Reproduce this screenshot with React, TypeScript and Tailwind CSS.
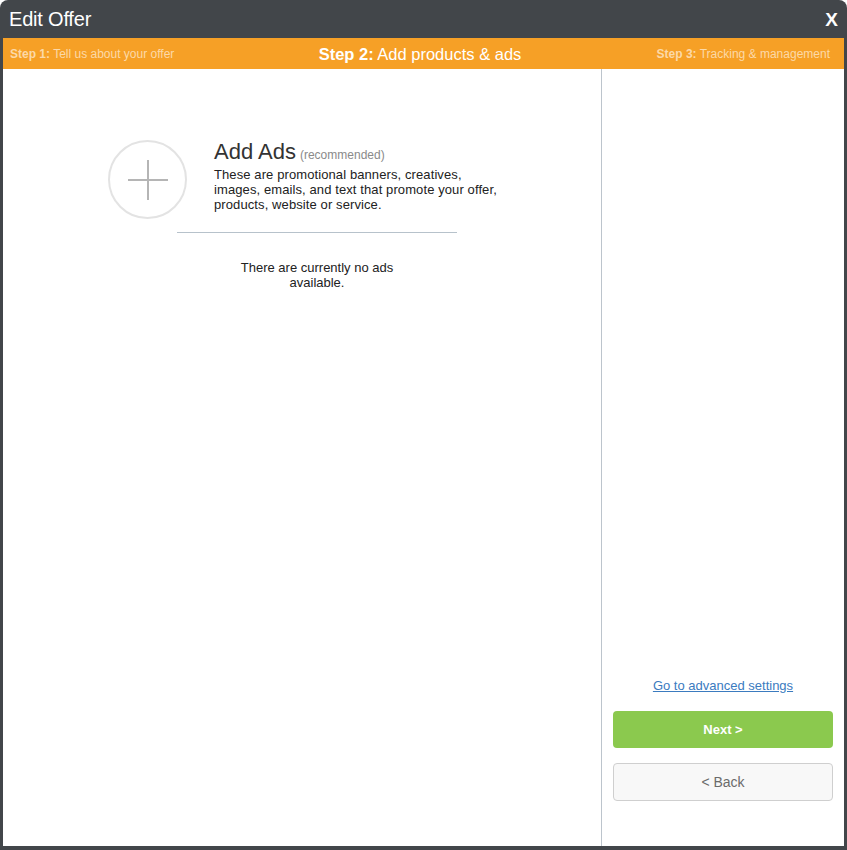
import React from "react";

export default function App() {
  return (
    <div className="w-[847px] h-[850px] bg-white" style={{ fontFamily: '"Liberation Sans", Arial, sans-serif' }}>
      <div className="w-full h-full rounded-t-[8px] bg-[#42464a] flex flex-col pb-[4px]">
        {/* Header */}
        <div className="h-[38px] flex items-center justify-between pl-[9px] pr-[9px] shrink-0">
          <span className="text-white text-[20px] leading-none tracking-[-0.2px]">Edit Offer</span>
          <span className="text-white text-[19px] font-bold leading-none">X</span>
        </div>
        {/* Steps bar */}
        <div className="mx-[3px] h-[31px] bg-[#f6a026] grid grid-cols-3 items-center pl-[7px] pr-[14px] shrink-0">
          <div className="text-left text-[12px] text-[#fcd9a8] whitespace-nowrap">
            <span className="font-bold">Step 1:</span> Tell us about your offer
          </div>
          <div className="text-center text-[16.5px] text-white whitespace-nowrap mt-[1px]">
            <span className="font-bold">Step 2:</span> Add products &amp; ads
          </div>
          <div className="text-right text-[12px] text-[#fcd9a8] whitespace-nowrap">
            <span className="font-bold">Step 3:</span> Tracking &amp; management
          </div>
        </div>
        {/* Body */}
        <div className="mx-[3px] flex-1 bg-white flex min-h-0">
          {/* Left panel */}
          <div className="w-[598px] shrink-0 pt-[71px]">
            <div className="flex items-start pl-[105px]">
              <div className="w-[79px] h-[79px] rounded-full border-2 border-[#e3e3e3] flex items-center justify-center shrink-0">
                <svg width="40" height="40" viewBox="0 0 40 40">
                  <line x1="0" y1="20" x2="40" y2="20" stroke="#b5b5b5" strokeWidth="2" />
                  <line x1="20" y1="0" x2="20" y2="40" stroke="#b5b5b5" strokeWidth="2" />
                </svg>
              </div>
              <div className="ml-[27px] w-[292px]">
                <div className="leading-[24px] text-[#333]">
                  <span className="text-[22px]">Add Ads</span>
                  <span className="text-[12px] text-[#8a8a8a] ml-[4px]">(recommended)</span>
                </div>
                <p className="text-[13px] leading-[15px] text-[#222] tracking-[0.1px]">
                  These are promotional banners, creatives, images, emails, and text that promote your offer, products, website or service.
                </p>
              </div>
            </div>
            <div className="ml-[174px] w-[280px] mt-[13px]">
              <div className="h-px bg-[#b7c2cb]" />
              <p className="mt-[27px] px-[50px] text-center text-[13px] leading-[15px] text-[#222]">
                There are currently no ads available.
              </p>
            </div>
          </div>
          {/* Divider */}
          <div className="w-px bg-[#bcc4cc] shrink-0" />
          {/* Right panel */}
          <div className="flex-1 flex flex-col justify-end pl-[11px] pr-[11px] pb-[45px]">
            <a href="#" className="text-center text-[13px] leading-[16px] text-[#3b7bbf] underline">
              Go to advanced settings
            </a>
            <button className="mt-[17px] h-[37px] w-full rounded-[4px] bg-[#8bc94e] text-white text-[13px] font-bold">
              Next &gt;
            </button>
            <button className="mt-[15px] h-[38px] w-full rounded-[4px] bg-[#f8f8f8] border border-[#cfcfcf] text-[#6b6b6b] text-[14px]">
              &lt; Back
            </button>
          </div>
        </div>
      </div>
    </div>
  );
}
